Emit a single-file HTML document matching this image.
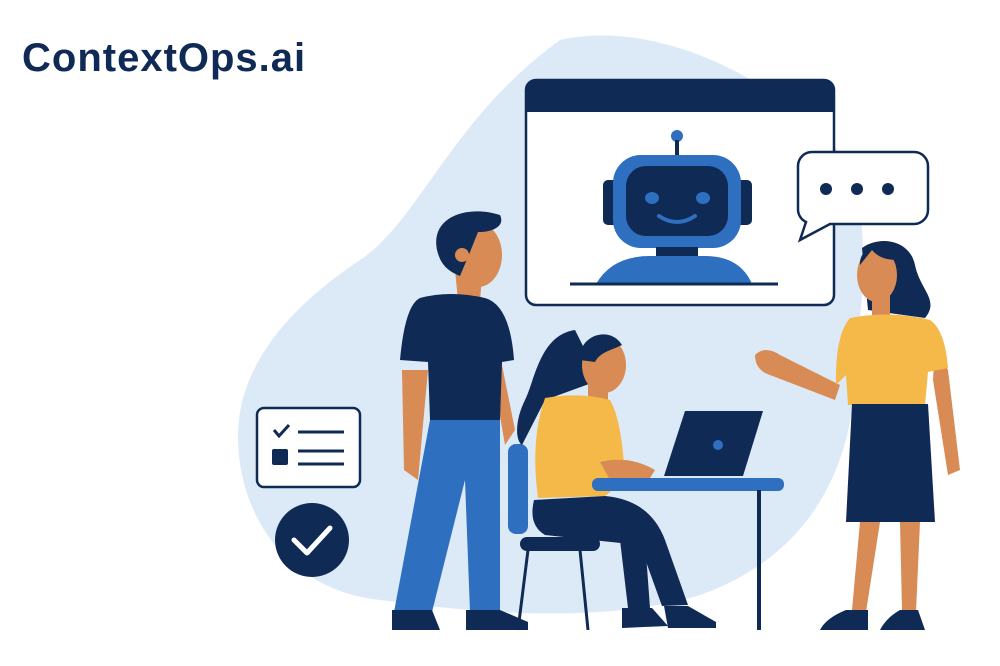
<!DOCTYPE html>
<html><head><meta charset="utf-8"><style>
html,body{margin:0;padding:0;background:#fff;width:1000px;height:666px;overflow:hidden}
.logo{position:absolute;left:22px;top:36px;font-family:"Liberation Sans",sans-serif;font-weight:bold;font-size:40px;color:#0f2a55;letter-spacing:1px}
svg{position:absolute;left:0;top:0}
</style></head><body>
<svg width="1000" height="666" viewBox="0 0 1000 666">
<path d="M560 40 C650 20 760 70 830 140 C880 200 860 300 855 380 C850 480 800 560 700 595 C600 625 470 612 380 600 C290 590 240 520 238 440 C236 360 300 300 360 260 C420 220 450 120 560 40 Z" fill="#dce9f7"/>
<rect x="526" y="80" width="308" height="225" rx="10" fill="#fff" stroke="#0f2a55" stroke-width="2.5"/>
<path d="M536 80 H824 A10 10 0 0 1 834 90 V112 H526 V90 A10 10 0 0 1 536 80 Z" fill="#0f2a55"/>
<circle cx="677" cy="136" r="6" fill="#2f6fc0"/>
<rect x="675" y="140" width="4" height="18" fill="#0f2a55"/>
<rect x="603" y="180" width="16" height="45" rx="5" fill="#0f2a55"/>
<rect x="736" y="180" width="16" height="45" rx="5" fill="#0f2a55"/>
<rect x="613" y="155" width="128" height="93" rx="28" fill="#2f6fc0"/>
<rect x="626" y="166" width="102" height="70" rx="20" fill="#0f2a55"/>
<ellipse cx="652" cy="198" rx="7" ry="6" fill="#2f6fc0"/>
<ellipse cx="703" cy="198" rx="7" ry="6" fill="#2f6fc0"/>
<path d="M659 216 Q677 228 695 216" stroke="#2f6fc0" stroke-width="4" fill="none" stroke-linecap="round"/>
<rect x="656" y="247" width="42" height="10" fill="#0f2a55"/>
<path d="M596 284 Q612 256 650 256 H705 Q740 256 752 284 Z" fill="#2f6fc0"/>
<line x1="570" y1="284" x2="778" y2="284" stroke="#0f2a55" stroke-width="3"/>
<path d="M812 152 H914 A14 14 0 0 1 928 166 V210 A14 14 0 0 1 914 224 H830 L800 240 L806 222 A14 14 0 0 1 798 210 V166 A14 14 0 0 1 812 152 Z" fill="#fff" stroke="#0f2a55" stroke-width="2.5"/>
<circle cx="826" cy="189" r="6" fill="#0f2a55"/><circle cx="857" cy="189" r="6" fill="#0f2a55"/><circle cx="888" cy="189" r="6" fill="#0f2a55"/>
<rect x="257" y="408" width="103" height="79" rx="7" fill="#fff" stroke="#0f2a55" stroke-width="2.5"/>
<path d="M274 430 L279 436 L289 425" stroke="#0f2a55" stroke-width="3" fill="none"/>
<line x1="298" y1="432" x2="344" y2="432" stroke="#0f2a55" stroke-width="3"/>
<rect x="272" y="449" width="16" height="16" rx="2" fill="#0f2a55"/>
<line x1="298" y1="451" x2="344" y2="451" stroke="#0f2a55" stroke-width="3"/>
<line x1="298" y1="464" x2="344" y2="464" stroke="#0f2a55" stroke-width="3"/>
<circle cx="312" cy="540" r="37" fill="#0f2a55"/>
<path d="M294 540 L307 553 L330 528" stroke="#fff" stroke-width="5" fill="none" stroke-linecap="round" stroke-linejoin="round"/>
<path d="M455 270 L458 300 L480 302 L482 275 Z" fill="#d98b55"/>
<ellipse cx="478" cy="255" rx="24" ry="32" fill="#d98b55"/>
<path d="M437 250 C430 215 470 205 500 215 C505 225 495 232 478 232 L470 252 L460 276 C445 270 440 262 437 250 Z" fill="#0f2a55"/>
<circle cx="462" cy="255" r="7" fill="#d98b55"/>
<path d="M402 370 L404 470 L418 480 L428 370 Z" fill="#d98b55"/>
<path d="M500 355 L515 430 L505 445 L492 370 Z" fill="#d98b55"/>
<path d="M420 298 Q450 290 485 298 Q510 305 514 360 L502 362 L500 420 L430 420 L428 362 L400 360 Q405 305 420 298 Z" fill="#0f2a55"/>
<path d="M430 420 H500 L500 612 H470 L465 480 L432 612 H394 Z" fill="#2f6fc0"/>
<path d="M392 610 H432 L440 630 H392 Z" fill="#0f2a55"/>
<path d="M466 610 H500 L528 622 L528 630 H466 Z" fill="#0f2a55"/>
<rect x="508" y="444" width="20" height="90" rx="8" fill="#2f6fc0"/>
<rect x="520" y="537" width="80" height="14" rx="7" fill="#0f2a55"/>
<line x1="528" y1="550" x2="518" y2="630" stroke="#0f2a55" stroke-width="3"/>
<line x1="580" y1="550" x2="588" y2="630" stroke="#0f2a55" stroke-width="3"/>
<path d="M575 330 C540 335 535 380 525 400 C515 420 515 440 522 445 L545 400 L600 380 Z" fill="#0f2a55"/>
<ellipse cx="604" cy="365" rx="22" ry="28" fill="#d98b55"/>
<path d="M580 360 C578 335 610 325 622 345 C612 350 600 352 595 362 Z" fill="#0f2a55"/>
<rect x="588" y="385" width="20" height="18" fill="#d98b55"/>
<path d="M545 398 Q580 392 610 400 Q622 420 625 480 L605 496 L538 498 Q530 440 545 398 Z" fill="#f5b94a"/>
<path d="M600 462 Q630 455 655 470 L650 478 L610 480 Z" fill="#d98b55"/>
<path d="M534 500 L605 496 Q650 500 665 540 L688 605 L662 606 L640 545 L545 535 Q528 525 534 500 Z" fill="#0f2a55"/>
<path d="M620 540 L628 608 L650 608 L645 540 Z" fill="#0f2a55"/>
<path d="M622 608 H652 L668 626 L622 628 Z" fill="#0f2a55"/>
<path d="M664 606 H688 L716 622 L716 628 H668 Z" fill="#0f2a55"/>
<path d="M685 411 H763 L743 476 H664 Z" fill="#0f2a55"/>
<circle cx="718" cy="445" r="5" fill="#2f6fc0"/>
<rect x="592" y="478" width="192" height="13" rx="6" fill="#2f6fc0"/>
<line x1="759" y1="490" x2="759" y2="630" stroke="#0f2a55" stroke-width="4"/>
<path d="M755 355 Q765 345 780 355 L840 385 L835 400 L770 375 Q755 370 755 355 Z" fill="#d98b55"/>
<path d="M862 248 C880 235 910 240 915 265 C920 290 940 300 925 318 L868 310 Z" fill="#0f2a55"/>
<ellipse cx="877" cy="275" rx="20" ry="27" fill="#d98b55"/>
<path d="M860 265 C858 242 900 232 910 258 C895 262 880 260 872 250 Z" fill="#0f2a55"/>
<rect x="872" y="295" width="18" height="22" fill="#d98b55"/>
<path d="M935 345 L948 370 L960 470 L948 475 L933 380 Z" fill="#d98b55"/>
<path d="M850 318 Q890 310 930 320 Q945 330 948 368 L928 372 L925 405 L848 405 L846 375 L836 385 Q835 335 850 318 Z" fill="#f5b94a"/>
<path d="M852 404 H928 L935 522 H846 Z" fill="#0f2a55"/>
<path d="M860 522 L852 610 L866 612 L880 522 Z" fill="#d98b55"/>
<path d="M900 522 L902 610 L916 612 L920 522 Z" fill="#d98b55"/>
<path d="M846 610 H868 L868 630 H820 Q826 618 846 610 Z" fill="#0f2a55"/>
<path d="M900 610 H918 L925 630 H880 Q886 618 900 610 Z" fill="#0f2a55"/>
</svg>
<div class="logo">ContextOps.ai</div>
</body></html>
